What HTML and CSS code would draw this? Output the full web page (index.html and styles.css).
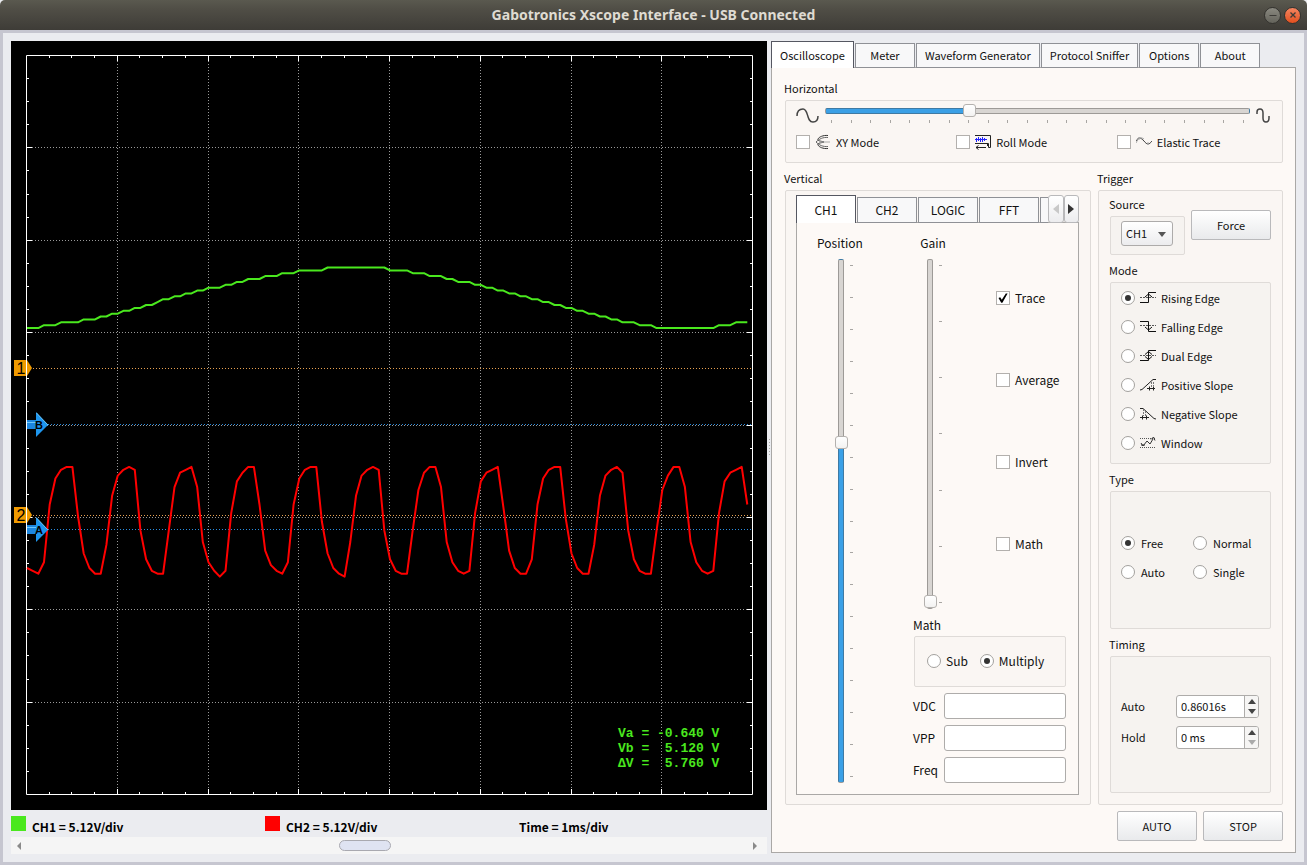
FILE: index.html
```html
<!DOCTYPE html>
<html lang="en">
<head>
  <title>Gabotronics Xscope Interface</title>
  <meta charset="UTF-8">
  <meta name="viewport" content="width=device-width, initial-scale=1.0">
  <link rel="stylesheet" href="styles.css">
</head>
<body>
  <header class="titlebar">
    <h1>Gabotronics Xscope Interface - USB Connected</h1>
    <div class="window-btns">
      <button class="win-btn" title="Minimize">
        <svg width="16" height="16" viewBox="0 0 16 16"><path d="M4.500 8.500H11.500" stroke="#3c3b37" fill="none"/></svg>
      </button>
      <button class="win-btn close" title="Close">
        <svg width="16" height="16" viewBox="0 0 16 16"><path d="M5.500 5.500L10.500 10.500M10.500 5.500L5.500 10.500" stroke="#3c3b37" stroke-width="1.300" fill="none"/></svg>
      </button>
    </div>
  </header>

  <main class="window">
    <!-- Scope screen -->
    <div class="screen-col">
      <div class="screen">
        <svg id="scope" viewBox="0 0 756 769">
          <g id="grid"></g>
          <path class="ref" d="M16 327.500H741M16 474.500H741"/>
          <path class="cursor" d="M16 383.500H741M16 488.500H741"/>
          <g id="traces"></g>
          <g class="marker">
            <path d="M3 319H16L21 327L16 335H3Z"/>
            <text x="10" y="333">1</text>
            <path d="M3 466H16L21 474L16 482H3Z"/>
            <text x="10" y="480">2</text>
          </g>
          <path d="M15.500 319V335M15.500 466V482" stroke="#fff"/>
          <g class="arrow">
            <path class="stem" d="M16 379H25V388H16Z"/>
            <path class="hi" d="M16 381.500H25"/>
            <path class="head" d="M25 371L37 384L25 396Z"/>
            <path class="hi" d="M25.500 372L37 384"/>
            <text x="28" y="388">B</text>
            <path class="stem" d="M16 484H25V493H16Z"/>
            <path class="hi" d="M16 486.500H25"/>
            <path class="head" d="M25 476L37 489L25 501Z"/>
            <path class="hi" d="M25.500 477L37 489"/>
            <text x="28" y="493">A</text>
          </g>
          <g class="readout">
            <text x="607" y="696">Va = -0.640 V</text>
            <text x="607" y="711">Vb =  5.120 V</text>
            <text x="607" y="726">ΔV =  5.760 V</text>
          </g>
        </svg>
      </div>
      <div class="scales">
        <div class="scale"><span class="swatch ch1"></span>CH1 = 5.12V/div</div>
        <div class="scale"><span class="swatch ch2"></span>CH2 = 5.12V/div</div>
        <div class="scale">Time = 1ms/div</div>
      </div>
      <div class="scrollbar">
        <button class="scroll-btn" title="Scroll left"><svg width="6" height="8" viewBox="0 0 6 8"><path d="M5 0V8L1 4Z" fill="#8a8a8a"/></svg></button>
        <input type="range" min="0" max="1000" value="467" aria-label="Trace position">
        <button class="scroll-btn" title="Scroll right"><svg width="6" height="8" viewBox="0 0 6 8"><path d="M1 0V8L5 4Z" fill="#8a8a8a"/></svg></button>
      </div>
    </div>

    <div class="splitter"><span></span></div>

    <!-- Controls -->
    <div class="controls">
      <nav class="tabs">
        <button class="tab active">Oscilloscope</button>
        <button class="tab">Meter</button>
        <button class="tab">Waveform Generator</button>
        <button class="tab">Protocol Sniffer</button>
        <button class="tab">Options</button>
        <button class="tab">About</button>
      </nav>
      <div class="panel">
        <section class="group">
          <h2>Horizontal</h2>
          <div class="box horizontal">
            <div class="time-row">
              <svg width="24" height="18" viewBox="0 0 24 18"><path d="M1 8C1 2 5 1 7 1C13 1 10 14 17 14C20 14 22 12 22 8" stroke="#444" stroke-width="1.500" fill="none"/></svg>
              <div class="hslider">
                <input type="range" class="slider" min="0" max="21" value="7" style="--fill: 34%" aria-label="Time per division">
                <div class="ticks" data-count="22"></div>
              </div>
              <svg width="16" height="18" viewBox="0 0 16 18"><path d="M2 6V4C2 2 3 1 5 1S8 2 8 5V10C8 13 9 14 11 14S14 13 14 10V8" stroke="#444" stroke-width="1.500" fill="none"/></svg>
            </div>
            <div class="mode-row">
              <label class="opt"><input type="checkbox">
                <svg width="16" height="16" viewBox="0 0 16 16" fill="none" stroke="#333"><path d="M13 1.500C8 1 4 3 3 5C2 7 6 7 9 8C6 9 2 9 3 11C4 13 8 15 13 14.500"/><path d="M13 3.500C8 3 4 5 1 8C4 11 8 13 13 12.500" stroke="#666"/><path d="M4 8H15" stroke="#aaa"/></svg>
                XY Mode</label>
              <label class="opt"><input type="checkbox">
                <svg width="16" height="16" viewBox="0 0 16 16" fill="none" stroke="#222"><path d="M0 1.500H15.500V13.500H13.500V9.500H0M12.500 9.500V12"/><path d="M1 13.500H11M3.500 11.500L1 13.500L3.500 15.500"/><path d="M0 5.500H12M1.500 4V8M3.500 3V7M5.500 4V8M7.500 3V8M9.500 4V7" stroke="#22f"/></svg>
                Roll Mode</label>
              <label class="opt"><input type="checkbox">
                <svg width="16" height="16" viewBox="0 0 16 16" fill="none"><path d="M0 7C3 2 5 4 8 7C11 11 13 11 16 7" stroke="#444"/><path d="M0 9C3 3 5 3 8 5M3 3V6M12 8V11" stroke="#aaa"/></svg>
                Elastic Trace</label>
            </div>
          </div>
        </section>

        <div class="middle">
          <section class="group vertical">
            <h2>Vertical</h2>
            <div class="box">
              <div class="tabs channel-tabs">
                <button class="tab active">CH1</button>
                <button class="tab">CH2</button>
                <button class="tab">LOGIC</button>
                <button class="tab">FFT</button>
                <button class="tab cut" title="More"></button>
                <button class="tab-scroll" title="Previous tabs"><svg width="6" height="10" viewBox="0 0 6 10"><path d="M6 0V10L0 5Z" fill="#c8c8c8"/></svg></button>
                <button class="tab-scroll" title="Next tabs"><svg width="6" height="10" viewBox="0 0 6 10"><path d="M0 0V10L6 5Z" fill="#333"/></svg></button>
              </div>
              <div class="channel">
                <div class="slider-col position">
                  <label for="position">Position</label>
                  <div class="vslider">
                    <input type="range" id="position" class="slider" min="0" max="1000" value="654" style="--fill: 65%">
                    <div class="ticks" data-count="17"></div>
                  </div>
                </div>
                <div class="channel-right">
                  <div class="gain-row">
                    <div class="slider-col gain">
                      <label for="gain">Gain</label>
                      <div class="vslider">
                        <input type="range" id="gain" class="slider" min="0" max="6" value="0" style="--fill: 0%">
                        <div class="ticks" data-count="7"></div>
                      </div>
                    </div>
                    <div class="flags">
                      <label class="opt"><input type="checkbox" checked>Trace</label>
                      <label class="opt"><input type="checkbox">Average</label>
                      <label class="opt"><input type="checkbox">Invert</label>
                      <label class="opt"><input type="checkbox">Math</label>
                    </div>
                  </div>
                  <section class="group">
                    <h3>Math</h3>
                    <div class="box math">
                      <label class="opt"><input type="radio" name="math">Sub</label>
                      <label class="opt"><input type="radio" name="math" checked>Multiply</label>
                    </div>
                  </section>
                  <div class="measures">
                    <label for="vdc">VDC</label><input type="text" id="vdc">
                    <label for="vpp">VPP</label><input type="text" id="vpp">
                    <label for="freq">Freq</label><input type="text" id="freq">
                  </div>
                </div>
              </div>
            </div>
          </section>

          <section class="group trigger">
            <h2>Trigger</h2>
            <div class="box">
              <div class="source-row">
                <section class="group">
                  <h3><label for="source">Source</label></h3>
                  <div class="box source">
                    <select id="source"><option>CH1</option><option>CH2</option><option>EXT</option></select>
                    <svg class="caret" width="8" height="5" viewBox="0 0 8 5"><path d="M0 0H8L4 5Z" fill="#555"/></svg>
                  </div>
                </section>
                <button class="btn">Force</button>
              </div>
              <section class="group">
                <h3>Mode</h3>
                <div class="box modes">
                  <label class="opt"><input type="radio" name="mode" checked>
                    <svg width="16" height="13" viewBox="0 0 16 13" fill="none" stroke="#111"><path d="M0 11.500H8.500V1.500H16M5 6L8.500 3L12 6"/><path d="M0 6.500H16" stroke-dasharray="2 1" stroke="#555"/></svg>
                    Rising Edge</label>
                  <label class="opt"><input type="radio" name="mode">
                    <svg width="16" height="13" viewBox="0 0 16 13" fill="none" stroke="#111"><path d="M0 1.500H8.500V11.500H16M5 7L8.500 10L12 7"/><path d="M0 5.500H16" stroke-dasharray="2 1" stroke="#555"/></svg>
                    Falling Edge</label>
                  <label class="opt"><input type="radio" name="mode">
                    <svg width="16" height="13" viewBox="0 0 16 13" fill="none" stroke="#111"><path d="M0 11.500H8.500V1.500H16M5 5.500L8.500 2.500L12 5.500M5 7.500L8.500 10.500L12 7.500"/><path d="M0 6.500H16" stroke-dasharray="2 1" stroke="#555"/></svg>
                    Dual Edge</label>
                  <label class="opt"><input type="radio" name="mode">
                    <svg width="16" height="13" viewBox="0 0 16 13" fill="none" stroke="#222"><path d="M0 12L2 11.500L13 1.500H16"/><path d="M11.500 4V10M13.500 4V8" stroke="#777" stroke-dasharray="2 1"/><path d="M7 10.500H15M9.500 8.500V12.500M13.500 8.500V12.500"/></svg>
                    Positive Slope</label>
                  <label class="opt"><input type="radio" name="mode">
                    <svg width="16" height="13" viewBox="0 0 16 13" fill="none" stroke="#222"><path d="M0 1.500H3L14 11.500L16 12"/><path d="M3.500 2V9M5.500 4V9" stroke="#777" stroke-dasharray="2 1"/><path d="M0 10.500H9M2.500 8.500V12.500M6.500 8.500V12.500"/></svg>
                    Negative Slope</label>
                  <label class="opt"><input type="radio" name="mode">
                    <svg width="16" height="13" viewBox="0 0 16 13" fill="none" stroke="#333"><path d="M0 2.500H16M0 11.500H16" stroke-dasharray="1 1" stroke="#555"/><path d="M1 7L3 10L7 5L10 8L13 3M11 3.500L13.500 1L15 4.500M1 9H5"/></svg>
                    Window</label>
                </div>
              </section>
              <section class="group grow">
                <h3>Type</h3>
                <div class="box types">
                  <label class="opt"><input type="radio" name="type" checked>Free</label>
                  <label class="opt"><input type="radio" name="type">Normal</label>
                  <label class="opt"><input type="radio" name="type">Auto</label>
                  <label class="opt"><input type="radio" name="type">Single</label>
                </div>
              </section>
              <section class="group grow">
                <h3>Timing</h3>
                <div class="box timing">
                  <label for="auto">Auto</label>
                  <div class="spin">
                    <input type="text" id="auto" value="0.86016s">
                    <div class="spin-btns">
                      <button title="Increase"><svg width="8" height="5" viewBox="0 0 8 5"><path d="M0 5H8L4 0Z" fill="#444"/></svg></button>
                      <button title="Decrease"><svg width="8" height="5" viewBox="0 0 8 5"><path d="M0 0H8L4 5Z" fill="#444"/></svg></button>
                    </div>
                  </div>
                  <label for="hold">Hold</label>
                  <div class="spin">
                    <input type="text" id="hold" value="0 ms">
                    <div class="spin-btns">
                      <button title="Increase"><svg width="8" height="5" viewBox="0 0 8 5"><path d="M0 5H8L4 0Z" fill="#444"/></svg></button>
                      <button title="Decrease" disabled><svg width="8" height="5" viewBox="0 0 8 5"><path d="M0 0H8L4 5Z" fill="#aaa"/></svg></button>
                    </div>
                  </div>
                </div>
              </section>
            </div>
          </section>
        </div>

        <div class="actions">
          <button class="btn">AUTO</button>
          <button class="btn">STOP</button>
        </div>
      </div>
    </div>
  </main>

  <script src="script.js"></script>
</body>
</html>
```

FILE: styles.css
```css
* {
  box-sizing: border-box;
}
body {
  margin: 0;
  height: 100vh;
  display: flex;
  flex-direction: column;
  background: #ebecf0;
  color: #111;
  font-family: "Noto Sans CJK SC", "Noto Sans", sans-serif;
  font-size: 11px;
  line-height: 18px;
}
h1, h2, h3 {
  margin: 0;
  font-size: inherit;
  font-weight: normal;
}
button, input, select {
  font: inherit;
  color: inherit;
  margin: 0;
}
button {
  padding: 0;
}
svg {
  display: block;
  flex: none;
}

/* Title bar */
.titlebar {
  height: 30px;
  display: grid;
  grid-template-columns: 1fr auto 1fr;
  align-items: center;
  padding: 0 6px;
  background: linear-gradient(#5a594f, #504e46 30%, #3e3c37);
  border-radius: 5px 5px 0 0;
}
.titlebar h1 {
  grid-column: 2;
  color: #dfdbd2;
  font-family: "Noto Sans", sans-serif;
  font-size: 14px;
  font-weight: bold;
}
.window-btns {
  display: flex;
  justify-content: flex-end;
  gap: 3px;
}
.win-btn {
  width: 17px;
  height: 17px;
  border: 1px solid #33322e;
  border-radius: 50%;
  background: linear-gradient(#8a8980, #64635b);
  display: flex;
  align-items: center;
  justify-content: center;
}
.win-btn.close {
  background: linear-gradient(#f58560, #e2501f);
}

.window {
  flex: 1;
  min-height: 0;
  display: grid;
  grid-template-columns: minmax(0, 1fr) 4px 525px;
  grid-template-rows: minmax(0, 1fr);
  padding: 8px;
  border: 3px solid #c6c6d0;
}

/* Scope screen */
.screen-col {
  display: flex;
  flex-direction: column;
}
.screen {
  flex: 1;
  min-height: 0;
  background: #000;
}
#scope {
  width: 100%;
  height: 100%;
}
#scope path {
  fill: none;
}
#scope .frame {
  stroke: #fff;
}
#scope .div {
  stroke: #999;
  stroke-dasharray: 1 2;
}
#scope .ref {
  stroke: #e8a050;
  stroke-dasharray: 1 2;
}
#scope .cursor {
  stroke: #2a8ce0;
  stroke-dasharray: 1 2;
}
#scope .trace {
  stroke-width: 2;
  stroke-linejoin: round;
}
#scope .marker path {
  fill: #f09a00;
}
#scope .marker text {
  font-family: "Liberation Sans Narrow", "Liberation Sans", sans-serif;
  font-size: 16px;
  text-anchor: middle;
}
#scope .arrow .stem {
  fill: #1c86e0;
}
#scope .arrow .head {
  fill: #1e96ee;
}
#scope .arrow .hi {
  stroke: #6cc6fa;
}
#scope .arrow text {
  font-family: "Liberation Sans", sans-serif;
  font-size: 11px;
  font-weight: bold;
  text-anchor: middle;
}
#scope .readout text {
  fill: #4ae81e;
  font-family: "Liberation Mono", monospace;
  font-size: 13px;
  font-weight: bold;
  white-space: pre;
}
.scales {
  height: 27px;
  display: grid;
  grid-template-columns: 1fr 1fr 1fr;
  gap: 6px;
  padding-top: 6px;
  color: #000;
  font-size: 12px;
  font-weight: bold;
  line-height: 21px;
}
.scale {
  display: flex;
  gap: 6px;
}
.swatch {
  width: 15px;
  height: 15px;
}
.swatch.ch1 {
  background: #4ae81e;
}
.swatch.ch2 {
  background: #f00;
}
.scrollbar {
  height: 17px;
  display: flex;
  padding-right: 4px;
  background: #f5f5f5;
}
.scrollbar input {
  flex: 1;
  min-width: 0;
  appearance: none;
  background: none;
}
.scrollbar input::-webkit-slider-thumb {
  appearance: none;
  width: 52px;
  height: 11px;
  border: 1px solid #a9a9b0;
  border-radius: 6px;
  background: #dfe3f2;
}
.scroll-btn {
  width: 16px;
  border: none;
  background: none;
  display: flex;
  align-items: center;
  justify-content: center;
}

.splitter {
  display: flex;
  align-items: center;
  justify-content: center;
}
.splitter span {
  width: 1px;
  height: 18px;
  background: repeating-linear-gradient(#aaa 0 1px, transparent 1px 3px);
}

/* Tabs */
.controls {
  min-height: 0;
  display: flex;
  flex-direction: column;
  padding-bottom: 1px;
}
.tabs {
  flex: none;
  display: flex;
  align-items: flex-end;
  gap: 1px;
  height: 26px;
}
.tab {
  min-width: 60px;
  height: 25px;
  padding: 0 8px 1px;
  border: 1px solid #8f9196;
  background: #f8f8f9;
  white-space: nowrap;
  position: relative;
  top: 1px;
}
.tab.active {
  height: 27px;
  border-color: #555761;
  border-bottom: none;
  background: #fff;
}
.panel {
  flex: 1;
  min-height: 0;
  display: flex;
  flex-direction: column;
  gap: 6px;
  padding: 11px 12px;
  border: 1px solid #aaa8a6;
  background: #fdf9f6;
}

/* Group boxes */
.group {
  display: flex;
  flex-direction: column;
  min-height: 0;
}
.group h2, .group h3 {
  flex: none;
  height: 21px;
  line-height: 19px;
}
.box {
  flex: 1;
  margin-left: 1px;
  border: 1px solid #dfdbd8;
  border-radius: 2px;
  background: #faf6f3;
}
.trigger .box .box {
  background: #f6f3f0;
}
.opt {
  display: flex;
  align-items: center;
  gap: 5px;
}
input[type="checkbox"], input[type="radio"] {
  appearance: none;
  flex: none;
  width: 14px;
  height: 14px;
  border: 1px solid #b3b0ad;
  background: #fff;
  display: grid;
  place-content: center;
}
input[type="radio"] {
  border-radius: 50%;
  border-color: #a3a19e;
}
input[type="radio"]:checked::before {
  content: "";
  width: 6px;
  height: 6px;
  border-radius: 50%;
  background: #333;
}
input[type="checkbox"]:checked::before {
  content: "";
  width: 10px;
  height: 10px;
  background: #000;
  clip-path: polygon(5% 50%, 22% 42%, 38% 68%, 78% 4%, 96% 4%, 44% 98%, 32% 98%);
}
.btn {
  width: 80px;
  height: 30px;
  border: 1px solid #b9b9bb;
  border-radius: 2px;
  background: linear-gradient(#fff, #e9eaec);
}

/* Sliders */
.slider {
  appearance: none;
  background: none;
  display: block;
}
.slider::-webkit-slider-runnable-track {
  border: 1px solid rgba(70, 66, 62, 0.4);
  border-radius: 2px;
}
.slider::-webkit-slider-thumb {
  appearance: none;
  width: 13px;
  height: 13px;
  border: 1px solid #b4b1ae;
  border-radius: 3px;
  background: linear-gradient(#fff, #f3f2f1);
}
.ticks {
  display: flex;
  justify-content: space-between;
}
.ticks i {
  background: #a8a6a3;
}
.hslider {
  flex: 1;
}
.hslider .slider {
  width: 100%;
  height: 13px;
}
.hslider .slider::-webkit-slider-runnable-track {
  height: 6px;
  background: linear-gradient(to right, #3ba0e6 var(--fill), #d8d5d2 var(--fill));
}
.hslider .slider::-webkit-slider-thumb {
  margin-top: -5px;
}
.hslider .ticks {
  margin: 3px 6px 0;
}
.hslider .ticks i {
  width: 1px;
  height: 3px;
}
.vslider {
  flex: 1;
  min-height: 0;
  display: flex;
  gap: 2px;
}
.vslider .slider {
  writing-mode: vertical-lr;
  direction: rtl;
  width: 14px;
  height: 100%;
}
.vslider .slider::-webkit-slider-runnable-track {
  width: 6px;
  background: linear-gradient(to top, #3ba0e6 var(--fill), #d8d5d2 var(--fill));
}
.vslider .slider::-webkit-slider-thumb {
  margin-left: -4px;
}
.vslider .ticks {
  flex-direction: column;
  margin: 6px 0;
}
.vslider .ticks i {
  width: 3px;
  height: 1px;
}

/* Horizontal */
.horizontal {
  padding: 3px 11px 11px 10px;
}
.time-row {
  display: flex;
  align-items: flex-start;
  gap: 5px;
}
.time-row > svg {
  margin-top: 4px;
}
.mode-row {
  display: grid;
  grid-template-columns: 1fr 1fr 1fr;
  gap: 6px;
  margin-top: 7px;
}

/* Vertical */
.middle {
  flex: 1;
  min-height: 0;
  display: grid;
  grid-template-columns: minmax(0, 1fr) 186px;
  grid-template-rows: minmax(0, 1fr);
  gap: 6px;
}
.vertical > .box {
  min-height: 0;
  display: flex;
  flex-direction: column;
  padding: 4px 11px 9px 10px;
}
.channel-tabs {
  height: 27px;
  font-size: 12px;
}
.channel-tabs .tab {
  width: 60px;
  height: 26px;
  padding: 0;
  z-index: 1;
}
.channel-tabs .tab.active {
  height: 28px;
}
.channel-tabs .tab.cut {
  width: 8px;
  min-width: 0;
  margin-right: -1px;
  border-right: none;
}
.tab-scroll {
  flex: 1;
  height: 28px;
  margin-right: -1px;
  border: 1px solid #b9b9bb;
  border-radius: 3px;
  background: linear-gradient(#fff, #ececee);
  display: flex;
  align-items: center;
  justify-content: center;
  position: relative;
  top: 1px;
  z-index: 2;
}
.tab-scroll:last-child {
  margin-right: 0;
}
.channel {
  flex: 1;
  min-height: 0;
  display: flex;
  justify-content: space-between;
  padding: 11px 12px 11px 8px;
  border: 1px solid #aaa8a6;
  background: #fdf9f6;
  font-size: 12px;
}
.slider-col {
  width: 40px;
  display: flex;
  flex-direction: column;
  align-items: center;
  gap: 7px;
}
.position {
  width: 70px;
}
.position .vslider {
  padding-left: 6px;
}
.gain .vslider {
  padding-right: 2px;
}
.channel-right {
  width: 153px;
  display: flex;
  flex-direction: column;
  gap: 6px;
}
.gain-row {
  flex: 1;
  min-height: 0;
  display: flex;
  justify-content: space-between;
}
.flags {
  width: 70px;
  display: flex;
  flex-direction: column;
  justify-content: space-around;
  padding: 23px 0 24px;
}
.math {
  height: 51px;
  flex: none;
  display: flex;
  align-items: center;
  gap: 12px;
  padding: 0 12px 2px;
}
.measures {
  display: grid;
  grid-template-columns: 31px 1fr;
  align-items: center;
  row-gap: 6px;
}
.measures input {
  width: 100%;
  height: 26px;
  padding: 0 5px;
  border: 1px solid #aeacaa;
  border-radius: 3px;
  background: #fff;
}

/* Trigger */
.trigger > .box {
  display: flex;
  flex-direction: column;
  gap: 6px;
  padding: 4px 11px 11px 10px;
}
.source-row {
  display: flex;
  justify-content: space-between;
}
.source-row .btn {
  margin-top: 15px;
}
.source {
  width: 75px;
  display: flex;
  align-items: flex-start;
  padding: 4px 10px 8px;
  position: relative;
}
.source select {
  appearance: none;
  width: 52px;
  height: 25px;
  padding: 0 4px 2px;
  border: 1px solid #adabaa;
  border-radius: 3px;
  background: linear-gradient(#fff, #ececee);
}
.caret {
  position: absolute;
  right: 18px;
  top: 15px;
  pointer-events: none;
}
.modes {
  padding: 0 10px 6px;
}
.modes .opt {
  height: 29px;
}
.grow {
  flex: 1;
}
.types {
  display: grid;
  grid-template-columns: 72px 1fr;
  align-content: center;
  row-gap: 11px;
  padding: 0 0 5px 10px;
}
.types .opt {
  gap: 6px;
}
.timing {
  display: grid;
  grid-template-columns: 55px 1fr;
  align-items: center;
  align-content: center;
  row-gap: 8px;
  padding: 0 11px 5px 10px;
}
.spin {
  height: 23px;
  display: flex;
  border: 1px solid #aeacaa;
  border-radius: 3px;
  background: #fff;
  overflow: hidden;
}
.spin input {
  flex: 1;
  min-width: 0;
  padding: 0 4px;
  border: none;
  background: none;
}
.spin-btns {
  width: 14px;
  display: flex;
  flex-direction: column;
  border-left: 1px solid #aeacaa;
  background: #f6f5f4;
}
.spin-btns button {
  flex: 1;
  border: none;
  background: none;
  display: flex;
  align-items: center;
  justify-content: center;
}
.actions {
  display: flex;
  justify-content: flex-end;
  gap: 6px;
}
```

FILE: script.js
```js
const SVG_NS = "http://www.w3.org/2000/svg";
const LEFT = 15, TOP = 14, RIGHT = 741, BOTTOM = 753;
const DIV_X = (RIGHT - LEFT) / 8;
const DIV_Y = (BOTTOM - TOP) / 8;

// samples as [level, repeat]
const ch1 = [[14,3],[15,3],[16,4],[17,3],[18,2],[19,2],[20,2],[21,2],[22,2],[23,1],[24,2],[25,2],
  [26,2],[27,2],[28,3],[29,2],[30,2],[31,3],[32,3],[33,3],[34,5],[35,11],[34,4],[33,3],[32,3],
  [31,2],[30,3],[29,2],[28,2],[27,2],[26,2],[25,2],[24,2],[23,2],[22,2],[21,2],[20,2],[19,2],
  [18,2],[17,2],[16,3],[15,3],[14,11],[15,3],[16,3]];

const ch2 = [-18,-19,-20,-16,4,13,16,17,17,0,-13,-18,-20,-20,-10,7,14,16,17,16,-5,-15,-19,-20,
  -20,-5,10,15,16,17,10,-9,-16,-19,-21,-19,1,12,15,17,17,4,-12,-17,-19,-20,-16,4,13,16,17,17,
  -2,-13,-18,-20,-21,-9,7,14,16,17,16,-5,-15,-19,-20,-20,-5,9,15,17,17,10,-9,-16,-19,-20,-19,
  1,12,15,16,17,3,-12,-18,-20,-20,-15,4,13,16,17,17,-1,-13,-18,-20,-20,-10,7,14,16,17,15,-5,
  -15,-19,-20,-20,-5,9,14,17,17,10,-9,-16,-19,-20,-19,1,12,15,16,17,4];

function addPath(parent, d, cls, color) {
  const path = document.createElementNS(SVG_NS, "path");
  path.setAttribute("d", d);
  path.setAttribute("class", cls);
  if (color) path.setAttribute("stroke", color);
  parent.appendChild(path);
}

function drawGrid() {
  const grid = document.getElementById("grid");
  let frame = `M${LEFT + 0.5} ${TOP + 0.5}H${RIGHT + 0.5}V${BOTTOM + 0.5}H${LEFT + 0.5}Z`;
  let divs = "";
  for (let i = 1; i < 32; i++) {
    const major = i % 4 === 0;
    const len = major ? 5 : 2;
    const x = Math.round(LEFT + i * DIV_X / 4) + 0.5;
    const y = Math.round(TOP + i * DIV_Y / 4) + 0.5;
    frame += `M${x} ${TOP + 1}v${len}M${x} ${BOTTOM}v${-len}`;
    frame += `M${LEFT + 1} ${y}h${len}M${RIGHT} ${y}h${-len}`;
    if (major) divs += `M${x} ${TOP}V${BOTTOM}M${LEFT} ${y}H${RIGHT}`;
  }
  addPath(grid, divs, "div");
  addPath(grid, frame, "frame");
}

function drawTrace(levels, zero, color) {
  const d = levels.map((v, i) =>
    `${i ? "L" : "M"}${(LEFT + 1 + i * DIV_X / 16).toFixed(1)} ${(zero - v * DIV_Y / 32).toFixed(1)}`);
  addPath(document.getElementById("traces"), d.join(""), "trace", color);
}

drawGrid();
drawTrace(ch1.flatMap(([v, n]) => Array(n).fill(v)), 327.5, "#4ae81e");
drawTrace(ch2, 475, "#ff0000");

document.querySelectorAll(".ticks").forEach((el) => {
  for (let i = 0; i < Number(el.dataset.count); i++) {
    el.appendChild(document.createElement("i"));
  }
});

// keep the coloured part of a slider behind its thumb
document.querySelectorAll(".slider").forEach((el) => {
  el.addEventListener("input", () => {
    const part = (el.value - el.min) / (el.max - el.min);
    el.style.setProperty("--fill", `${Math.round(part * 100)}%`);
  });
});
```
